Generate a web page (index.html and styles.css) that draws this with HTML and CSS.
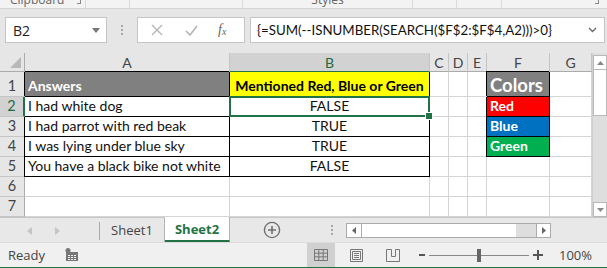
FILE: index.html
```html
<!DOCTYPE html>
<html>
<head>
<meta charset="utf-8">
<link rel="stylesheet" href="styles.css">
</head>
<body>
<div class="app">
  <div class="ribbon">
    <div class="rgroup g1"><span class="rlabel">Clipboard</span><span class="launch"></span></div>
    <div class="rgroup g2"></div>
    <div class="rgroup g3"></div>
    <div class="rgroup g4"><span class="rlabel">Styles</span></div>
    <div class="rgroup g5"></div>
    <div class="rgroup g6"></div>
    <div class="rgroup g7"><span class="launch"></span></div>
  </div>

  <div class="fbar">
    <div class="namebox"><span>B2</span><svg class="nbarrow" width="8" height="5" viewBox="0 0 8 5"><path d="M0 0H8L4 5Z" fill="#777"/></svg></div>
    <div class="fdots"><i></i><i></i><i></i></div>
    <div class="fxbox">
      <svg width="12" height="12" viewBox="0 0 12 12"><path d="M1 1L11 11M11 1L1 11" stroke="#b4b4b4" stroke-width="1.3" fill="none"/></svg>
      <svg width="13" height="11" viewBox="0 0 13 11"><path d="M1 6L5 10L12 1" stroke="#b4b4b4" stroke-width="1.6" fill="none"/></svg>
      <span class="fx">f<sub>x</sub></span>
    </div>
    <div class="finput"><span>{=SUM(--ISNUMBER(SEARCH($F$2:$F$4,A2)))&gt;0}</span><svg width="9" height="6" viewBox="0 0 9 6"><path d="M1 1L4.5 4.5L8 1" stroke="#666" stroke-width="1.3" fill="none"/></svg></div>
  </div>

  <div class="sheetwrap">
    <div class="grid">
      <div class="ch corner"><span class="tri"></span></div>
      <div class="ch">A</div>
      <div class="ch selh">B</div>
      <div class="ch">C</div>
      <div class="ch">D</div>
      <div class="ch">E</div>
      <div class="ch">F</div>
      <div class="ch">G</div>

      <div class="rh r1">1</div>
      <div class="c bk lead top hdr gray">Answers</div>
      <div class="c bk hdr yellow center">Mentioned Red, Blue or Green</div>
      <div class="c"></div><div class="c"></div><div class="c"></div>
      <div class="c bk lead top gray colors">Colors</div>
      <div class="c"></div>

      <div class="rh selr">2</div>
      <div class="c bk">I had white dog</div>
      <div class="c bk center cellsel">FALSE<span class="sel"><span class="handle"></span></span></div>
      <div class="c"></div><div class="c"></div><div class="c"></div>
      <div class="c bk lead red swatch">Red</div>
      <div class="c"></div>

      <div class="rh">3</div>
      <div class="c bk lead">I had parrot with red beak</div>
      <div class="c bk center">TRUE</div>
      <div class="c"></div><div class="c"></div><div class="c"></div>
      <div class="c bk lead blue swatch">Blue</div>
      <div class="c"></div>

      <div class="rh">4</div>
      <div class="c bk lead">I was lying under blue sky</div>
      <div class="c bk center">TRUE</div>
      <div class="c"></div><div class="c"></div><div class="c"></div>
      <div class="c bk lead green swatch">Green</div>
      <div class="c"></div>

      <div class="rh">5</div>
      <div class="c bk lead">You have a black bike not white</div>
      <div class="c bk center">FALSE</div>
      <div class="c"></div><div class="c"></div><div class="c"></div>
      <div class="c"></div>
      <div class="c"></div>

      <div class="rh">6</div>
      <div class="c"></div><div class="c"></div><div class="c"></div><div class="c"></div><div class="c"></div><div class="c"></div><div class="c"></div>

      <div class="rh">7</div>
      <div class="c"></div><div class="c"></div><div class="c"></div><div class="c"></div><div class="c"></div><div class="c"></div><div class="c"></div>
    </div>
    <div class="vscroll">
      <div class="sbtn"><svg width="7" height="4" viewBox="0 0 7 4"><path d="M0 4H7L3.5 0Z" fill="#888"/></svg></div>
      <div class="vthumb"></div>
      <div class="vtrack"></div>
      <div class="sbtn"><svg width="7" height="4" viewBox="0 0 7 4"><path d="M0 0H7L3.5 4Z" fill="#888"/></svg></div>
    </div>
  </div>

  <div class="tabsbar">
    <div class="navs">
      <svg width="5" height="8" viewBox="0 0 5 8"><path d="M5 0V8L0 4Z" fill="#c4c4c4"/></svg>
      <svg width="5" height="8" viewBox="0 0 5 8"><path d="M0 0V8L5 4Z" fill="#c4c4c4"/></svg>
    </div>
    <div class="tab">Sheet1</div>
    <div class="tab active">Sheet2</div>
    <div class="addtab"><svg width="18" height="18" viewBox="0 0 18 18"><circle cx="9" cy="9" r="7.6" stroke="#707070" stroke-width="1.4" fill="none"/><path d="M9 5V13M5 9H13" stroke="#707070" stroke-width="1.6"/></svg></div>
    <div class="hdots"><i></i><i></i><i></i></div>
    <div class="hscroll">
      <div class="hbtn"><svg width="4" height="7" viewBox="0 0 4 7"><path d="M4 0V7L0 3.5Z" fill="#666"/></svg></div>
      <div class="hthumb"></div>
      <div class="htrack"></div>
      <div class="hbtn rb"><svg width="4" height="7" viewBox="0 0 4 7"><path d="M0 0V7L4 3.5Z" fill="#666"/></svg></div>
    </div>
  </div>

  <div class="status">
    <span class="ready">Ready</span>
    <svg class="macro" width="13" height="13" viewBox="0 0 13 13"><circle cx="3" cy="2.5" r="2.5" fill="#777"/><rect x="1" y="4" width="12" height="9" fill="#777"/><g fill="#f0f0f0"><rect x="3" y="7" width="2" height="1"/><rect x="6" y="7" width="2" height="1"/><rect x="9" y="7" width="2" height="1"/><rect x="3" y="9" width="2" height="1"/><rect x="6" y="9" width="2" height="1"/><rect x="9" y="9" width="2" height="1"/><rect x="3" y="11" width="2" height="1"/><rect x="6" y="11" width="2" height="1"/><rect x="9" y="11" width="2" height="1"/></g></svg>
    <div class="spacer"></div>
    <div class="vbtn on"><svg width="14" height="12" viewBox="0 0 14 12"><path d="M0.5 0.5H13.5V11.5H0.5ZM0.5 4.2H13.5M0.5 7.8H13.5M4.8 0.5V11.5M9.2 0.5V11.5" stroke="#777" fill="none"/></svg></div>
    <div class="vbtn"><svg width="13" height="13" viewBox="0 0 13 13"><path d="M0.5 0.5H12.5V12.5H0.5ZM2.5 2.5H10.5V10.5H2.5ZM4 4.5H9M4 6.5H9M4 8.5H9" stroke="#777" fill="none"/></svg></div>
    <div class="vbtn"><svg width="14" height="13" viewBox="0 0 14 13"><path d="M0.5 0.5V12.5H13.5V0.5M0.5 0.5H5.5V7.5H9.5V0.5H13.5" stroke="#777" fill="none"/></svg></div>
    <div class="zoomctl">
      <span class="zminus"></span>
      <div class="zline"><span class="zthumb"></span></div>
      <svg width="10" height="10" viewBox="0 0 10 10"><path d="M5 0V10M0 5H10" stroke="#555" stroke-width="2"/></svg>
    </div>
    <span class="pct">100%</span>
  </div>
</div>
</body>
</html>
```

FILE: styles.css
```css
* { box-sizing: border-box; }
html, body { margin: 0; padding: 0; }
body { width: 607px; height: 268px; overflow: hidden; background: #e6e6e6; font-family: "Open Sans", "Noto Sans", sans-serif; }
.app { display: flex; flex-direction: column; width: 607px; height: 268px; }

/* ribbon remnant */
.ribbon { height: 9px; display: flex; background: #f3f3f3; border-bottom: 1px solid #d4d4d4; overflow: hidden; }
.rgroup { position: relative; border-right: 1px solid #dadada; display: flex; justify-content: center; height: 8px; }
.g1 { width: 86px; justify-content: flex-start; padding-left: 10px; }
.g2 { width: 44px; }
.g3 { width: 113px; }
.g4 { width: 170px; }
.g5 { width: 44px; }
.g6 { width: 45px; }
.g7 { flex: 1; border-right: none; justify-content: flex-end; padding-right: 8px; }
.rlabel { font-size: 12px; color: #666; line-height: 12px; margin-top: -6px; }
.launch { width: 4px; height: 4px; border-right: 1px solid #888; border-bottom: 1px solid #888; margin-left: 13px; margin-top: 0; }

/* formula bar */
.fbar { height: 44px; display: flex; align-items: flex-start; padding-top: 8px; background: #e6e6e6; }
.namebox { margin-left: 5px; width: 102px; height: 26px; background: #fff; border: 1px solid #c6c6c6; display: flex; align-items: center; justify-content: space-between; padding: 0 6px 0 7px; font-size: 14px; color: #222; }
.nbarrow { margin-top: 1px; }
.fdots { width: 30px; height: 26px; display: flex; flex-direction: column; align-items: center; justify-content: center; gap: 2px; }
.fdots i, .hdots i { display: block; width: 2px; height: 2px; background: #a8a8a8; }
.fxbox { width: 108px; height: 26px; background: #fff; border: 1px solid #c6c6c6; display: flex; align-items: center; padding-left: 13px; gap: 22px; }
.fx { font-family: "Liberation Serif", serif; font-style: italic; font-size: 14px; color: #666; margin-left: -2px; }
.fx sub { font-size: 10px; vertical-align: -1px; }
.finput { margin-left: 5px; width: 355px; height: 26px; background: #fff; border: 1px solid #c6c6c6; display: flex; align-items: center; justify-content: space-between; padding: 0 7px 0 6px; font-family: "Lato", "Liberation Sans", sans-serif; font-size: 13.3px; color: #111; }

/* sheet */
.sheetwrap { height: 164px; display: flex; background: #fff; }
.grid { flex: 1; display: grid; grid-template-columns: 25px 205px 200px 19px 19px 19px 63px 42px; grid-template-rows: 19px 25px repeat(6, 20px); font-family: "Lato", "Liberation Sans", sans-serif; font-size: 14px; color: #111; overflow: hidden; }
.ch { background: #e6e6e6; border-right: 1px solid #c4c4c4; border-bottom: 1px solid #ababab; color: #444; font-size: 14px; display: flex; align-items: center; justify-content: center; padding-top: 1px; }
.ch.corner { position: relative; border-right: 1px solid #ababab; }
.tri { position: absolute; right: 3px; bottom: 3px; width: 0; height: 0; border-left: 11px solid transparent; border-bottom: 11px solid #b8b8b8; }
.ch.selh { background: #d2d2d2; color: #1e6b40; border-bottom: 1px solid #217346; }
.rh { background: #e6e6e6; border-right: 1px solid #ababab; border-bottom: 1px solid #c4c4c4; color: #444; display: flex; align-items: flex-end; justify-content: center; padding-bottom: 1px; line-height: 18px; font-size: 14.5px; }
.rh.selr { background: #d2d2d2; color: #1e6b40; border-right: 2px solid #217346; }
.c { border-right: 1px solid #d4d4d4; border-bottom: 1px solid #d4d4d4; display: flex; align-items: flex-end; padding: 0 3px 1px 3px; line-height: 18px; white-space: nowrap; }
.c.bk { border-right-color: #000; border-bottom-color: #000; }
.c.lead { box-shadow: -1px 0 0 #000; }
.c.top { box-shadow: -1px -1px 0 #000; }
.c.center { justify-content: center; }
.hdr { font-weight: 700; }
.gray { background: #808080; color: #fff; }
.yellow { background: #ffff00; color: #000; }
.colors { font-size: 18.5px; font-weight: 700; line-height: 22px; padding-bottom: 0; }
.swatch { color: #fff; font-weight: 700; }
.red { background: #ff0000; }
.blue { background: #0070c0; }
.green { background: #00b050; }
.cellsel { position: relative; }
.sel { position: absolute; left: -1px; top: -1px; right: -1px; bottom: -1px; border: 2px solid #217346; }
.handle { position: absolute; right: -4px; bottom: -4px; width: 6px; height: 6px; background: #217346; outline: 1px solid #fff; }

.vscroll { width: 15px; display: flex; flex-direction: column; background: #e0e0e0; border-left: 1px solid #d0d0d0; padding-top: 2px; }
.sbtn { height: 15px; background: #fff; border: 1px solid #b8b8b8; display: flex; align-items: center; justify-content: center; }
.vthumb { height: 46px; background: #fff; border: 1px solid #b8b8b8; border-top: none; }
.vtrack { flex: 1; background: #dedede; }

/* tabs */
.tabsbar { height: 25px; display: flex; align-items: stretch; background: #e8e8e8; border-top: 1px solid #c6c6c6; }
.navs { width: 100px; display: flex; align-items: center; gap: 23px; padding-left: 27px; border-right: 1px solid #a9a9a9; margin: 4px 0 2px 0; }
.tab { width: 65px; display: flex; align-items: center; justify-content: center; font-size: 13px; color: #444; border-right: 1px solid #b4b4b4; }
.tab.active { background: #fff; color: #217346; font-weight: 700; border-bottom: 2px solid #217346; margin-top: -1px; }
.addtab { width: 83px; display: flex; align-items: center; justify-content: center; padding-left: 0; }
.hdots { width: 20px; display: flex; flex-direction: column; align-items: center; justify-content: center; gap: 2px; margin-left: 9px; }
.hscroll { margin-left: 4px; width: 205px; height: 15px; align-self: center; display: flex; border: 1px solid #ababab; background: #fff; }
.hbtn { width: 15px; border-right: 1px solid #ababab; display: flex; align-items: center; justify-content: center; }
.hbtn.rb { border-right: none; border-left: 1px solid #ababab; width: 14px; }
.hthumb { width: 154px; background: #fff; }
.htrack { flex: 1; background: #dedede; }

/* status */
.status { height: 26px; display: flex; align-items: center; background: #f0f0f0; border-bottom: 1px solid #217346; border-top: 1px solid #dcdcdc; font-size: 13px; color: #444; }
.ready { margin-left: 8px; }
.macro { margin-left: 20px; margin-top: -1px; }
.spacer { flex: 1; }
.vbtn { width: 28px; height: 100%; display: flex; align-items: center; justify-content: center; margin-right: 8px; }
.vbtn.on { background: #d0d0d0; }
.zoomctl { display: flex; align-items: center; margin-left: 4px; }
.zminus { width: 6px; height: 2px; background: #555; }
.zline { width: 100px; height: 1px; background: #888; margin: 0 4px 0 4px; position: relative; }
.zthumb { position: absolute; left: 48px; top: -6px; width: 4px; height: 13px; background: #666; }
.pct { margin-left: 16px; margin-right: 15px; color: #444; }
```
